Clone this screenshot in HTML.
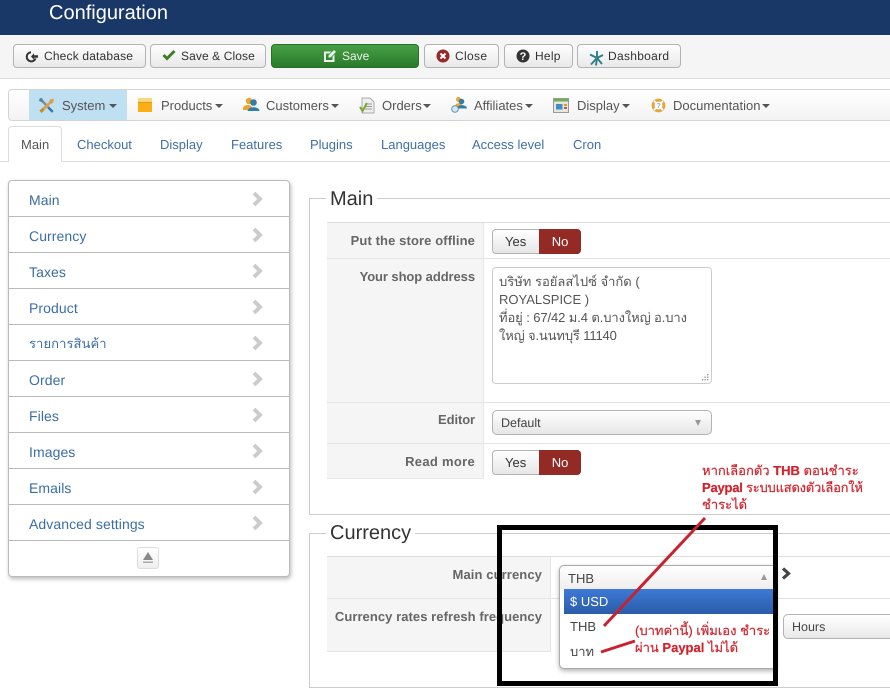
<!DOCTYPE html>
<html><head><meta charset="utf-8">
<style>
html,body{margin:0;padding:0;background:#fff;}
body{width:890px;height:690px;overflow:hidden;position:relative;font-family:"Liberation Sans","Noto Sans CJK SC",sans-serif;font-size:13px;color:#555;text-rendering:geometricPrecision;}
.a{position:absolute;white-space:nowrap;box-sizing:border-box;}
.btn{position:absolute;top:44px;height:24px;box-sizing:border-box;border:1px solid #b3b3b3;border-radius:4px;background:linear-gradient(#fff,#e9e9e9);font-size:12px;line-height:22px;color:#333;white-space:nowrap;}
.btn span{position:absolute;top:0;}
.btn svg{position:absolute;}
.nav{position:absolute;top:98px;font-size:13px;line-height:15px;color:#555;white-space:nowrap;}
.car{position:absolute;top:104px;width:0;height:0;border-left:4px solid transparent;border-right:4px solid transparent;border-top:4px solid #555;}
.tab{position:absolute;top:137px;font-size:13px;line-height:15px;color:#3f6fa3;white-space:nowrap;}
.sl{position:absolute;left:29px;font-size:14px;line-height:16px;color:#3b6ea5;white-space:nowrap;letter-spacing:.08px;}
.sep{position:absolute;left:9px;width:280px;height:1px;background:#bbb;}
.lb{position:absolute;font-weight:bold;font-size:13px;line-height:15px;color:#666;text-align:right;white-space:nowrap;}
.tg{position:absolute;left:492px;width:89px;height:25px;box-sizing:border-box;border:1px solid #b3b3b3;border-radius:4px;background:linear-gradient(#fff,#e6e6e6);font-size:13px;line-height:23px;color:#333;}
.tg b{position:absolute;left:46px;top:-1px;width:42px;height:25px;background:#942a25;color:#fff;font-weight:normal;text-align:center;border-radius:0 4px 4px 0;line-height:25px;}
.tg i{position:absolute;left:12px;top:0;font-style:normal;}
.rt{position:absolute;color:#d3222c;font-size:13px;line-height:17px;white-space:nowrap;-webkit-text-stroke:.2px #d3222c;}
</style></head><body>

<div class="a" style="left:0;top:0;width:890px;height:35px;background:#1a3867;"></div>
<div class="a" style="left:49px;top:1px;font-size:20px;line-height:24px;color:#fff;">Configuration</div>

<div class="a" style="left:0;top:35px;width:890px;height:44px;background:#f5f5f5;border-bottom:1px solid #ddd;"></div>

<div class="btn" style="left:13px;width:133px;"><svg style="left:11px;top:5px" width="14" height="13" viewBox="0 0 14 13"><path d="M6 2.2A4.6 4.6 0 1 0 10.6 8.5" fill="none" stroke="#333" stroke-width="2"/><path d="M6 6.5L9 3.2V5.3H13V7.7H9V9.8Z" fill="#333"/></svg><span style="left:30px;letter-spacing:.17px">Check database</span></div>
<div class="btn" style="left:150px;width:116px;"><svg style="left:11px;top:4px" width="14" height="12" viewBox="0 0 14 12"><path d="M1.5 6L5 9.5L12.5 2" fill="none" stroke="#3f7f2b" stroke-width="3"/></svg><span style="left:30px;letter-spacing:.1px">Save &amp; Close</span></div>
<div class="btn" style="left:271px;width:148px;background:linear-gradient(#46a046,#2a7a2a);border-color:#2a6e2a;color:#e8f2e8;"><svg style="left:51px;top:4px" width="14" height="14" viewBox="0 0 14 14"><path d="M1 2.5H8.5L6.5 4.5H3V11H9.5V7.5L11.5 5.5V13H1Z" fill="#e8f2e8"/><path d="M5.5 6.5L11 1L13 3L7.5 8.5H5.5Z" fill="#e8f2e8"/></svg><span style="left:70px">Save</span></div>
<div class="btn" style="left:424px;width:75px;"><svg style="left:11px;top:4px" width="14" height="14" viewBox="0 0 14 14"><circle cx="7" cy="7" r="6.5" fill="#942a25"/><path d="M4.5 4.5L9.5 9.5M9.5 4.5L4.5 9.5" stroke="#fff" stroke-width="2"/></svg><span style="left:30px;letter-spacing:.35px">Close</span></div>
<div class="btn" style="left:504px;width:69px;"><svg style="left:11px;top:4px" width="14" height="14" viewBox="0 0 14 14"><circle cx="7" cy="7" r="6.5" fill="#333"/><text x="7" y="11" font-size="11" font-weight="bold" fill="#fff" text-anchor="middle" font-family="Liberation Sans">?</text></svg><span style="left:30px;letter-spacing:.25px">Help</span></div>
<div class="btn" style="left:577px;width:104px;"><svg style="left:10px;top:5px" width="16" height="16" viewBox="0 0 16 16"><path d="M9 1V8M9 8L2 4.5M9 8L15 5M9 8L3 14.5M9 8L14 14M9 8L8 15.5" fill="none" stroke="#2f7f86" stroke-width="1.9"/></svg><span style="left:30px;letter-spacing:.3px">Dashboard</span></div>

<!-- nav -->
<div class="a" style="left:8px;top:89px;width:900px;height:32px;border:1px solid #d4d4d4;border-radius:4px;background:linear-gradient(#fff,#f3f3f3);"></div>
<div class="a" style="left:29px;top:90px;width:98px;height:30px;background:#bfdff2;"></div>

<svg class="a" style="left:38px;top:97px" width="17" height="17" viewBox="0 0 17 17"><path d="M2 1.5L4 .8L5 3L15.5 14L14 15.8L3.5 5L1 4Z" fill="#7f8c96"/><path d="M16 1.5L12 2.5L11 5L1.5 13.5L3.5 16L12.5 7L15 6Z" fill="#d9a14a"/><path d="M1.5 13.5L3.5 16L6.5 13L4.5 11Z" fill="#c98a2e"/><path d="M11 10L15.5 14L14 15.8L9.5 11.5Z" fill="#2f79a8"/><path d="M2 1L5 3.5L4 5L1 3.5Z" fill="#3b87b8"/></svg>
<div class="nav" style="left:62px">System</div><div class="car" style="left:109px"></div>

<svg class="a" style="left:137px;top:97px" width="16" height="16" viewBox="0 0 16 16"><path d="M1 1H15V15H1Z" fill="#fbb62c"/><path d="M1 1H15V5H1Z" fill="#f7d779"/><path d="M1 5H15V6H1Z" fill="#e59a14"/><path d="M1 6H15V15H1Z" fill="#fcae18"/></svg>
<div class="nav" style="left:161px">Products</div><div class="car" style="left:215px"></div>

<svg class="a" style="left:242px;top:96px" width="18" height="17" viewBox="0 0 18 17"><circle cx="7" cy="5" r="3.2" fill="#efa32f"/><path d="M1 12C2 8 10 8 10 12L6 14H1Z" fill="#efa32f"/><circle cx="11.5" cy="6.5" r="3.3" fill="#2f7fa8"/><path d="M5.5 15C6 10 17 10 17.5 15Z" fill="#2f7fa8"/></svg>
<div class="nav" style="left:266px">Customers</div><div class="car" style="left:331px"></div>

<svg class="a" style="left:359px;top:97px" width="16" height="17" viewBox="0 0 16 17"><path d="M3 1H11L15 5V16H3Z" fill="#eee" stroke="#aaa"/><path d="M6 7H13M6 9.5H13M6 12H13" stroke="#999"/><path d="M1 10L3.5 14L8 6" fill="none" stroke="#79a82e" stroke-width="2"/></svg>
<div class="nav" style="left:382px">Orders</div><div class="car" style="left:423px"></div>

<svg class="a" style="left:451px;top:96px" width="17" height="17" viewBox="0 0 17 17"><circle cx="7.5" cy="3.5" r="2.5" fill="#efa32f"/><path d="M4 11C4 6 11 6 11 10Z" fill="#efa32f"/><circle cx="10.5" cy="5.5" r="2.8" fill="#2f7fa8"/><path d="M6 12.5C6.5 8 15.5 8 16 12.5Z" fill="#2f7fa8"/><circle cx="4" cy="13" r="3.3" fill="#dbe6ec" stroke="#5a93b5"/></svg>
<div class="nav" style="left:474px">Affiliates</div><div class="car" style="left:525px"></div>

<svg class="a" style="left:553px;top:98px" width="16" height="15" viewBox="0 0 16 15"><rect x=".5" y=".5" width="15" height="14" fill="#e8e4de" stroke="#999"/><rect x="1" y="1" width="14" height="2.5" fill="#6fb14c"/><rect x="3" y="6" width="6.5" height="5.5" fill="#3f8fc4"/><rect x="11" y="6" width="3" height="2" fill="#d99a3a"/><rect x="11" y="9" width="3" height="2" fill="#c9573a"/></svg>
<div class="nav" style="left:577px">Display</div><div class="car" style="left:622px"></div>

<svg class="a" style="left:651px;top:98px" width="15" height="15" viewBox="0 0 15 15"><circle cx="7.5" cy="7.5" r="5.2" fill="#fff"/><circle cx="7.5" cy="7.5" r="5.4" fill="none" stroke="#e8a33c" stroke-width="3"/><path d="M3 3L5.5 5.5M12 3L9.5 5.5M3 12L5.5 9.5M12 12L9.5 9.5" stroke="#fff" stroke-width="2"/><text x="7.5" y="10" font-size="7" fill="#5f7f9f" text-anchor="middle" font-family="Liberation Sans">?</text></svg>
<div class="nav" style="left:673px">Documentation</div><div class="car" style="left:762px"></div>

<!-- tabs -->
<div class="a" style="left:0;top:161px;width:890px;height:1px;background:#ddd;"></div>
<div class="a" style="left:8px;top:126px;width:54px;height:36px;background:#fff;border:1px solid #ddd;border-bottom:0;border-radius:4px 4px 0 0;"></div>
<div class="tab" style="left:21px;color:#555">Main</div>
<div class="tab" style="left:77px">Checkout</div>
<div class="tab" style="left:160px">Display</div>
<div class="tab" style="left:231px">Features</div>
<div class="tab" style="left:310px">Plugins</div>
<div class="tab" style="left:381px">Languages</div>
<div class="tab" style="left:472px">Access level</div>
<div class="tab" style="left:573px">Cron</div>

<!-- sidebar -->
<div class="a" style="left:8px;top:180px;width:282px;height:397px;border:1px solid #bbb;border-radius:4px;background:#fff;box-shadow:1px 2px 4px rgba(0,0,0,.28);"></div>
<div class="sep" style="top:216px"></div><div class="sep" style="top:252px"></div><div class="sep" style="top:288px"></div><div class="sep" style="top:324px"></div><div class="sep" style="top:360px"></div><div class="sep" style="top:396px"></div><div class="sep" style="top:432px"></div><div class="sep" style="top:468px"></div><div class="sep" style="top:504px"></div><div class="sep" style="top:540px"></div>
<div class="sl" style="top:192px">Main</div>
<div class="sl" style="top:228px">Currency</div>
<div class="sl" style="top:264px">Taxes</div>
<div class="sl" style="top:300px">Product</div>
<div class="sl" style="top:336px;font-size:13px">รายการสินค้า</div>
<div class="sl" style="top:372px">Order</div>
<div class="sl" style="top:408px">Files</div>
<div class="sl" style="top:444px">Images</div>
<div class="sl" style="top:480px">Emails</div>
<div class="sl" style="top:516px">Advanced settings</div>
<svg class="a" style="left:252px;top:191px" width="11" height="340" viewBox="0 0 11 340"><g fill="none" stroke="#ccc" stroke-width="4"><path d="M2 2L8 8L2 14"/><path d="M2 38L8 44L2 50"/><path d="M2 74L8 80L2 86"/><path d="M2 110L8 116L2 122"/><path d="M2 146L8 152L2 158"/><path d="M2 182L8 188L2 194"/><path d="M2 218L8 224L2 230"/><path d="M2 254L8 260L2 266"/><path d="M2 290L8 296L2 302"/><path d="M2 326L8 332L2 338"/></g></svg>
<div class="a" style="left:137px;top:547px;width:22px;height:22px;border:1px solid #ddd;border-radius:3px;background:linear-gradient(#fff,#eee);"></div>
<svg class="a" style="left:142px;top:552px" width="12" height="12" viewBox="0 0 12 12"><path d="M6 0L11 8H1Z" fill="#888"/><rect x="1" y="9.5" width="10" height="1.5" fill="#aaa"/></svg>

<!-- Main fieldset -->
<div class="a" style="left:309px;top:198px;width:600px;height:317px;border:1px solid #ccc;"></div>
<div class="a" style="left:326px;top:187px;background:#fff;padding:0 4px;font-size:20px;line-height:24px;color:#333;">Main</div>

<div class="a" style="left:327px;top:222px;width:600px;height:1px;background:#ddd;"></div>
<div class="a" style="left:327px;top:223px;width:156px;height:256px;background:#f5f5f5;"></div>
<div class="a" style="left:483px;top:223px;width:1px;height:256px;background:#e6e6e6;"></div>
<div class="a" style="left:327px;top:258px;width:600px;height:1px;background:#e4e4e4;"></div>
<div class="a" style="left:327px;top:402px;width:600px;height:1px;background:#e4e4e4;"></div>
<div class="a" style="left:327px;top:443px;width:600px;height:1px;background:#e4e4e4;"></div>
<div class="a" style="left:327px;top:478px;width:157px;height:1px;background:#e8e8e8;"></div>

<div class="lb" style="right:415px;top:233px;letter-spacing:.11px">Put the store offline</div>
<div class="lb" style="right:415px;top:269px;letter-spacing:-.08px">Your shop address</div>
<div class="lb" style="right:415px;top:412px;letter-spacing:-.1px">Editor</div>
<div class="lb" style="right:415px;top:454px;letter-spacing:.3px">Read more</div>

<div class="tg" style="top:229px"><i>Yes</i><b>No</b></div>
<div class="tg" style="top:450px"><i>Yes</i><b>No</b></div>

<div class="a" style="left:492px;top:267px;width:220px;height:117px;border:1px solid #ccc;border-radius:4px;background:#fff;font-size:13px;line-height:18px;color:#555;padding:0 6px;white-space:normal;">
<div style="position:absolute;left:6px;top:5px;white-space:nowrap;">บริษัท รอยัลสไปซ์ จำกัด (<br>ROYALSPICE )<br><span style="letter-spacing:-.1px">ที่อยู่ : 67/42 ม.4 ต.บางใหญ่ อ.บาง</span><br><span style="letter-spacing:-.15px">ใหญ่ จ.นนทบุรี 11140</span></div></div>
<svg class="a" style="left:700px;top:372px" width="10" height="10" viewBox="0 0 10 10"><path d="M7 2h1.4v1.4H7zM4.5 4.5h1.4v1.4H4.5zM7 4.5h1.4v1.4H7zM2 7h1.4v1.4H2zM4.5 7h1.4v1.4H4.5zM7 7h1.4v1.4H7z" fill="#999"/></svg>

<div class="a" style="left:492px;top:410px;width:220px;height:25px;border:1px solid #b3b3b3;border-radius:5px;background:linear-gradient(#fff,#e6e6e6);font-size:12.5px;line-height:25px;color:#444;padding-left:8px;">Default</div>
<div class="a" style="left:695px;top:420px;width:0;height:0;border-left:3.5px solid transparent;border-right:3.5px solid transparent;border-top:6px solid #999;"></div>

<!-- Currency fieldset -->
<div class="a" style="left:309px;top:533px;width:600px;height:155px;border:1px solid #ccc;"></div>
<div class="a" style="left:326px;top:521px;background:#fff;padding:0 4px;font-size:20px;line-height:24px;color:#333;">Currency</div>

<div class="a" style="left:327px;top:556px;width:600px;height:1px;background:#ddd;"></div>
<div class="a" style="left:327px;top:557px;width:223px;height:95px;background:#f5f5f5;border-bottom:1px solid #e4e4e4;"></div>
<div class="a" style="left:550px;top:557px;width:1px;height:95px;background:#e6e6e6;"></div>
<div class="a" style="left:327px;top:598px;width:600px;height:1px;background:#e4e4e4;"></div>

<div class="lb" style="right:348px;top:567px;letter-spacing:.1px">Main currency</div>
<div class="lb" style="right:348px;top:609px;letter-spacing:.06px">Currency rates refresh frequency</div>

<svg class="a" style="left:781px;top:567px" width="11" height="13" viewBox="0 0 11 13"><path d="M2 1.5L7.5 6.5L2 11.5" fill="none" stroke="#444" stroke-width="3.2"/></svg>

<div class="a" style="left:783px;top:614px;width:140px;height:25px;border:1px solid #b3b3b3;border-radius:5px;background:linear-gradient(#fff,#e9e9e9);font-size:12.5px;line-height:24px;color:#444;padding-left:8px;">Hours</div>

<!-- dropdown -->
<div class="a" style="left:559px;top:565px;width:217px;height:104px;border:1px solid #aaa;border-radius:5px 0 0 5px;background:#fff;box-shadow:0 2px 5px rgba(0,0,0,.3);"></div>
<div class="a" style="left:560px;top:566px;width:214px;height:23px;border-radius:5px 0 0 0;background:linear-gradient(#fff,#eee);"></div>
<div class="a" style="left:568px;top:571px;font-size:13px;line-height:16px;color:#444;">THB</div>
<div class="a" style="left:761px;top:574px;width:0;height:0;border-left:3.5px solid transparent;border-right:3.5px solid transparent;border-bottom:6px solid #999;"></div>
<div class="a" style="left:564px;top:589px;width:210px;height:25px;background:linear-gradient(#3d79d6,#2a5ca8);"></div>
<div class="a" style="left:570px;top:594px;font-size:13px;line-height:16px;color:#fff;">$ USD</div>
<div class="a" style="left:570px;top:619px;font-size:13px;line-height:16px;color:#444;">THB</div>
<div class="a" style="left:570px;top:644px;font-size:13px;line-height:16px;color:#444;">บาท</div>

<!-- black rectangle -->
<div class="a" style="left:497px;top:525px;width:281px;height:161px;border:5px solid #000;"></div>

<!-- annotations -->
<svg class="a" style="left:0;top:0" width="890" height="690" viewBox="0 0 890 690"><path d="M705 518L604 626" stroke="#c9222e" stroke-width="3" fill="none"/><path d="M635 641L601 652" stroke="#c9222e" stroke-width="3" fill="none"/></svg>
<div class="rt" style="left:702px;top:462px">หากเลือกตัว <b>THB</b> ตอนชำระ</div>
<div class="rt" style="left:702px;top:479px;letter-spacing:-.22px"><b>Paypal</b> ระบบแสดงตัวเลือกให้</div>
<div class="rt" style="left:702px;top:496px">ชำระได้</div>
<div class="rt" style="left:635px;top:622px">(บาทค่านี้) เพิ่มเอง ชำระ</div>
<div class="rt" style="left:635px;top:639px">ผ่าน <b>Paypal</b> ไม่ได้</div>

</body></html>
